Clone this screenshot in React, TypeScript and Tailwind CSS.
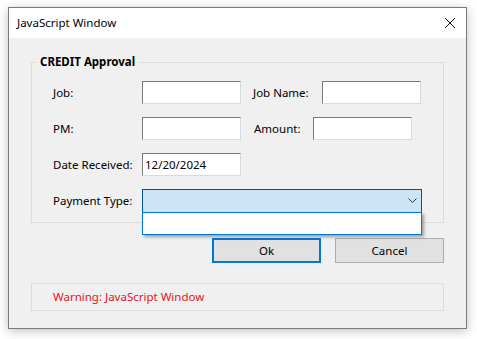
import React from "react";

const font = { fontFamily: '"Noto Sans", "Segoe UI", sans-serif' };

function TextBox({ w, value }: { w: string; value?: string }) {
  return (
    <div
      className={`${w} h-[23px] bg-white border border-t-[#7a7a7a] border-l-[#7a7a7a] border-r-[#dadada] border-b-[#dadada] flex items-center pl-[2px] text-[11.5px] text-black`}
    >
      {value}
    </div>
  );
}

export default function App() {
  return (
    <div className="min-h-[339px] w-[477px] bg-white pt-[7px] pl-[8px]" style={font}>
      <div className="w-[459px] h-[322px] border border-[#7a7a7a] bg-[#f0f0f0] shadow-[0_2px_10px_rgba(0,0,0,0.25)] flex flex-col text-[11.5px] text-black">
        <div className="h-[30px] bg-white flex items-center justify-between pl-[8px] pr-[8px]">
          <span className="text-[11.5px]">JavaScript Window</span>
          <svg width="12" height="12" viewBox="0 0 12 12" className="mr-[2px]">
            <path d="M1 1 L11 11 M11 1 L1 11" stroke="#111" strokeWidth="1" />
          </svg>
        </div>
        <div className="flex flex-col px-[22px] pt-[24px]">
          <div className="relative border border-[#dcdcdc] h-[161px]">
            <div className="absolute -top-[10px] left-[4px] bg-[#f0f0f0] px-[4px] font-bold text-[11.5px] leading-[18px]">
              CREDIT Approval
            </div>
            <div className="flex flex-col gap-[13px] pt-[18px] pl-[21px]">
              <div className="flex items-center">
                <span className="w-[89px]">Job:</span>
                <TextBox w="w-[99px]" />
                <span className="w-[69px] ml-[12px]">Job Name:</span>
                <TextBox w="w-[99px]" />
              </div>
              <div className="flex items-center">
                <span className="w-[89px]">PM:</span>
                <TextBox w="w-[99px]" />
                <span className="w-[59px] ml-[13px]">Amount:</span>
                <TextBox w="w-[99px]" />
              </div>
              <div className="flex items-center">
                <span className="w-[89px]">Date Received:</span>
                <TextBox w="w-[99px]" value="12/20/2024" />
              </div>
              <div className="flex items-center">
                <span className="w-[89px]">Payment Type:</span>
                <div className="relative w-[280px] h-[24px] bg-[#cce4f7] border border-[#005499] flex items-center justify-end pr-[4px]">
                  <svg width="9" height="6" viewBox="0 0 9 6">
                    <path d="M0.5 0.5 L4.5 4.5 L8.5 0.5" stroke="#333" strokeWidth="1" fill="none" />
                  </svg>
                  <div className="absolute left-[-1px] top-[22px] w-[280px] h-[23px] bg-white border border-[#0078d7] shadow-[2px_2px_3px_rgba(0,0,0,0.35)]" />
                </div>
              </div>
            </div>
          </div>
          <div className="flex justify-end gap-[14px] mt-[15px]">
            <button className="w-[109px] h-[25px] bg-[#e1e1e1] border-2 border-[#0078d7] text-[11.5px]">Ok</button>
            <button className="w-[109px] h-[25px] bg-[#e1e1e1] border border-[#adadad] text-[11.5px]">Cancel</button>
          </div>
          <div className="mt-[20px] h-[28px] border border-[#dcdcdc] flex items-center pl-[21px] text-[#e81123]">
            Warning: JavaScript Window
          </div>
        </div>
      </div>
    </div>
  );
}
